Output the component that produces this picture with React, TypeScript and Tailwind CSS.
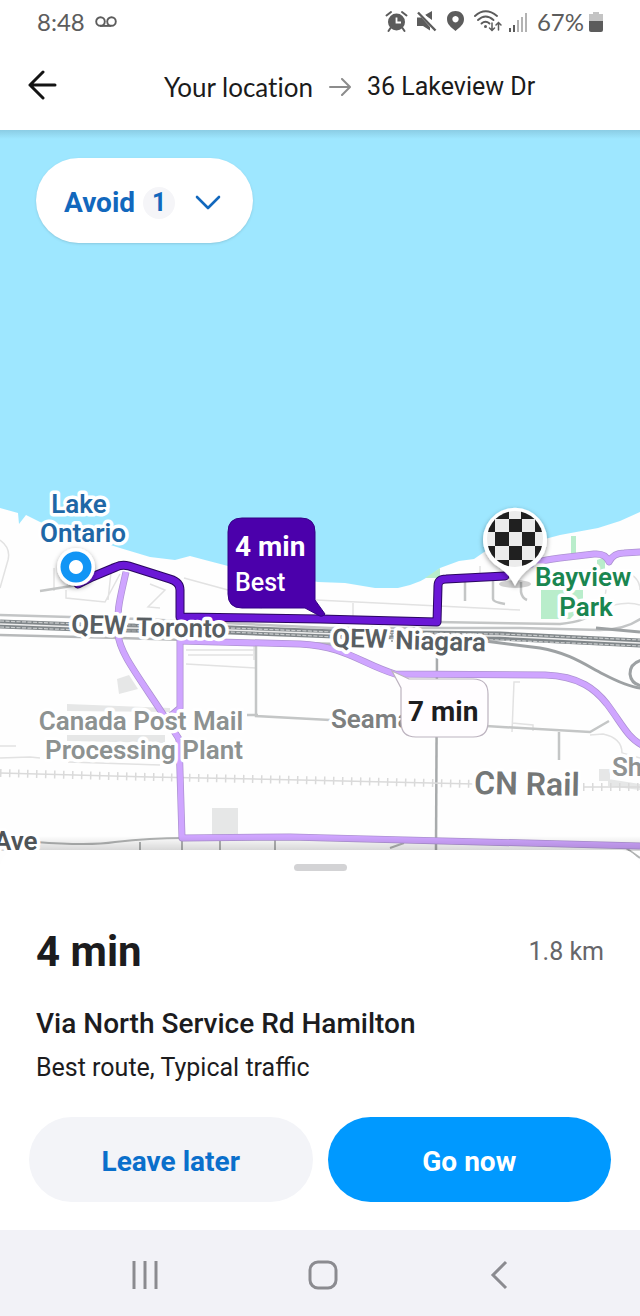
import React from "react";

const label = {
  fontFamily: "Roboto, sans-serif",
  stroke: "#ffffff",
  strokeWidth: 7,
  strokeLinejoin: "round" as const,
  paintOrder: "stroke" as const,
};

function StatusIcons() {
  return (
    <svg width="144" height="24" viewBox="384 10 144 24" fill="#5c5c5c" aria-hidden="true">
      <g>
        <circle cx="395.500" cy="22" r="8.500" />
        <path d="M385.500 15.500 L390 12 M405.500 15.500 L401 12 M389.500 28 L387.500 31 M401.500 28 L403.500 31" stroke="#5c5c5c" strokeWidth="2" strokeLinecap="round" />
        <path d="M395.500 17.500 V22.500 H400" stroke="#fff" strokeWidth="1.800" fill="none" />
      </g>
      <path d="M416 17.500 H420.500 L429 27 V30.500 L422 26 H416 Z M424 15 L431 11 V20 Z" />
      <path d="M420 12 L436 29" stroke="#fff" strokeWidth="2" />
      <path d="M417 12.500 L434.500 30.500" stroke="#5c5c5c" strokeWidth="2.400" />
      <path fillRule="evenodd" d="M454.500 11 C449.500 11 446 14.500 446 19 C446 24.500 450 27 454.500 31 C459 27 463 24.500 463 19 C463 14.500 459.500 11 454.500 11 Z M454.500 16 A3.200 3.200 0 1 0 454.510 16 Z" />
      <g fill="none" stroke="#5c5c5c" strokeWidth="1.900" strokeLinecap="round">
        <path d="M474 16 Q484.500 6.500 496 16" />
        <path d="M477 20 Q484.500 13 492.500 20" />
        <path d="M480.500 23.500 Q484.500 20 488.500 23.500" />
        <path d="M491 23 V30 M488.500 28 L491 30.500 L493.500 28 M497.500 30 V23 M495 25 L497.500 22.500 L500 25" strokeWidth="1.500" />
      </g>
      <circle cx="484.500" cy="26.500" r="1.500" />
      <path d="M508 28h2v4h-2z M512 25h2v7h-2z" />
      <path d="M516 20h2v12h-2z M520 17h2v15h-2z M524 13h2v19h-2z" fill="#b3b3b3" />
    </svg>
  );
}

function StatusBar() {
  return (
    <div className="flex h-11 items-center justify-between pr-9 pl-[37px] text-[#5c5c5c]">
      <div className="flex items-center gap-2.5">
        <span className="font-[Lato,sans-serif] text-[24px] leading-6">8:48</span>
        <svg width="22" height="14" viewBox="0 0 22 14" fill="none" stroke="#5c5c5c" strokeWidth="1.900" aria-hidden="true">
          <ellipse cx="5.500" cy="6.500" rx="4.300" ry="4.300" />
          <ellipse cx="16.500" cy="6.500" rx="4.300" ry="4.300" />
          <path d="M5 10.900 H16" />
        </svg>
      </div>
      <div className="flex items-center gap-2">
        <StatusIcons />
        <div className="flex items-center gap-1">
          <span className="font-[Lato,sans-serif] text-[24px] leading-6">67%</span>
          <svg width="16" height="22" viewBox="0 0 16 22" aria-hidden="true">
            <path d="M5 1 h6 v2 h4 v7 H1 V3 h4z" fill="#c4c4c4" />
            <path d="M1 10 h14 v9 q0 2 -2 2 H3 q-2 0 -2 -2z" fill="#5c5c5c" />
          </svg>
        </div>
      </div>
    </div>
  );
}

function Header() {
  return (
    <header className="flex h-[86px] items-center pb-1 pl-[27px] text-[#1b1b1b]">
      <button aria-label="Back" className="flex size-8 items-center">
        <svg width="30" height="30" viewBox="0 0 30 30" fill="none" stroke="#141414" strokeWidth="3" strokeLinecap="round" strokeLinejoin="round">
          <path d="M28 15 H3 M16 2 L3 15 L16 28" />
        </svg>
      </button>
      <div className="flex flex-1 items-center justify-center gap-4 pt-1 text-[25px] leading-8">
        <span className="font-[Lato,sans-serif] text-[26px] [font-variant-ligatures:none]">Your location</span>
        <svg width="22" height="18" viewBox="0 0 22 18" fill="none" stroke="#8c8c8c" strokeWidth="2" strokeLinecap="round" strokeLinejoin="round" aria-hidden="true">
          <path d="M1 9 H20 M13 1 L21 9 L13 17" />
        </svg>
        <span>36 Lakeview Dr</span>
      </div>
    </header>
  );
}

const altRoutes = [
  "M126 572 C121 595 116 610 118 634 C120 656 142 680 179 739",
  "M180 620 V708 L168 718",
  "M179 739 L182 838 L290 837 L640 846",
  "M180 641 L300 644 C345 646 362 664 395 674 L545 675 C580 676 596 690 607 704 C622 724 628 738 642 745",
  "M512 574 C530 562 545 560 560 558 L594 554 Q606 553 609 562 Q613 553 624 553 L642 552",
];

const mainRoute = "M78 584 Q86 580 92 577 L116 567 Q122 564 129 566 L170 579 Q180 582 180 590 V617 L320 619 L437 622 L438 586 Q438 579 446 579 L505 576";

function RouteMap() {
  return (
    <svg
      viewBox="0 130 640 740"
      className="block h-full w-full"
      role="img"
      aria-label="Route map"
    >
      <defs>
        <linearGradient id="sheetShade" x1="0" y1="0" x2="0" y2="1">
          <stop offset="0" stopColor="#000" stopOpacity="0" />
          <stop offset="1" stopColor="#000" stopOpacity="0.160" />
        </linearGradient>
        <linearGradient id="headerShade" x1="0" y1="0" x2="0" y2="1">
          <stop offset="0" stopColor="#5f8fa5" stopOpacity="0.300" />
          <stop offset="1" stopColor="#5f8fa5" stopOpacity="0" />
        </linearGradient>
        <filter id="soft" x="-30%" y="-30%" width="160%" height="160%">
          <feDropShadow dx="0" dy="2" stdDeviation="2.500" floodOpacity="0.400" />
        </filter>
        <clipPath id="flagClip"><circle cx="515" cy="539" r="28" /></clipPath>
      </defs>

      <rect x="0" y="130" width="640" height="740" fill="#fefefe" />
      <path fill="#9ee7ff" d="M0 130 H640 V512 L620 521 L598 528 L560 535 L545 539 L490 548 L474 559 L459 561 L440 568 Q424 583 398 588 L375 588 L345 583 L318 582 L228 566 L205 560 L190 556 L175 560 L150 557 L120 548 L95 540 L40 522 L26 515 L19 524 L18 513 L0 508 Z" />
      <rect x="0" y="130" width="640" height="9" fill="url(#headerShade)" />

      <g fill="#b9edcb">
        <path d="M541 590 H583 V606 L570 619 H541 Z" />
        <path d="M571 536 h5 v20 h-5z M597 560 l8 -3 v14 h-8z M425 578 L440 568 V578 Z" />
      </g>
      <g fill="#e6e7e7">
        <path d="M117 679 L129 675 L138 689 L119 694 Z M67 704 L170 708 L170 712 L67 711 Z M67 735 L165 735 V743 L67 741 Z" />
        <path d="M212 808 H238 V835 H212 Z M599 769 h11 v12 h-11z M608 779 L640 784 V790 L608 786Z" />
      </g>

      <g fill="none" stroke="#e2e2e2" strokeWidth="1.500">
        <path d="M0 540 Q11 548 8 560 L0 588 M54 568 V591 M66 590 V598 L105 602 L120 574 M112 563 L108 600 M184 578 L228 590 M150 584 L165 590 L148 607 L160 608 M230 600 L262 608 M316 600 L520 610 M353 603 V618" />
        <path d="M186 650 H256 V668 L186 664 M188 655 H253 M254 645 V660 M512 732 L514 682 H520 M512 723 L533 725 V731 M590 735 L603 734 Q622 738 622 753 L640 758" />
        <path d="M595 610 Q625 600 640 605 M600 576 Q612 590 600 602 M620 570 Q640 575 640 590 M480 566 V580 M0 758 L30 757 L40 758 M0 746 H16 M68 762 L160 765" />
      </g>

      <g fill="none" stroke="#c4c6c6" strokeWidth="2.500">
        <path d="M40 591 L78 585 M465 581 V601 M493 581 V599 Q493 602 505 604 M521 582 V592 Q522 598 527 600 M436 622 L560 624 Q588 621 596 611" />
        <path d="M256 646 V716 L330 720 M247 715 H258 M486 726 L590 732 L609 721 M559 732 V760" />
      </g>
      <path d="M437 652 L436 850" stroke="#a8abac" strokeWidth="2.500" fill="none" />
      <path d="M36 842 Q90 846 115 842 Q150 838 184 838 M140 842 V850 M182 838 V850 M220 840 V850 M275 840 V850 M390 848 L404 843 M626 848 L640 858" stroke="#b1b3b3" strokeWidth="2" fill="none" />

      <g fill="none">
        <path d="M0 773 L150 777 L300 780 L475 784 M583 787 L640 787" stroke="#dadada" strokeWidth="1.500" />
        <path d="M0 773 L150 777 L300 780 L475 784 M583 787 L640 787" stroke="#dadada" strokeWidth="8" strokeDasharray="1.500 7.500" />
      </g>

      <g fill="none" strokeLinecap="butt">
        <path d="M0 615 L140 619 L330 628 L520 628 L600 630 Q625 630 642 618" stroke="#c3c5c6" strokeWidth="2.500" />
        <path d="M0 635 L120 638 L250 642 L340 644" stroke="#b7b9ba" strokeWidth="2.500" />
        <path d="M0 624 L80 627 L230 630 L335 634 L500 636 L642 643" stroke="#81878a" strokeWidth="9" />
        <path d="M0 621 L80 624 L230 628 L335 632 L500 634 L642 640 M0 627 L80 630 L230 632 L335 637 L500 640 L642 646" stroke="#c9cccd" strokeWidth="1.200" strokeDasharray="4 1.500" />
        <path d="M0 624 L80 627 L230 630 L335 634 L500 636 L642 643" stroke="#eeeeee" strokeWidth="1.500" />
        <path d="M485 641 L540 648 C570 653 587 666 603 674 Q630 688 642 688 M596 628 L640 632" stroke="#9da1a3" strokeWidth="3" />
        <path d="M642 660 Q630 663 630 674 Q631 684 642 686" stroke="#9da1a3" strokeWidth="3" />
      </g>

      <g fill="none" strokeLinejoin="round">
        {altRoutes.map((d) => <path key={d} d={d} stroke="#ad92d2" strokeWidth="7" />)}
        {altRoutes.map((d) => <path key={d} d={d} stroke="#cfa5ff" strokeWidth="5.500" />)}
        <path d={mainRoute} stroke="#2a075f" strokeWidth="9" strokeLinecap="round" />
        <path d={mainRoute} stroke="#6a18d6" strokeWidth="7" strokeLinecap="round" />
      </g>

      <rect x="0" y="836" width="640" height="15" fill="url(#sheetShade)" />

      <g style={label} fontWeight="600" fontSize="26">
        <g fill="#1f67a6" textAnchor="middle">
          <text x="79" y="513">Lake</text>
          <text x="83" y="542">Ontario</text>
        </g>
        <g fill="#585e62">
          <text x="71" y="633" transform="rotate(1.500 71 633)">QEW</text>
          <text x="136" y="636" transform="rotate(1 136 636)">Toronto</text>
          <text x="332" y="647" transform="rotate(1 332 647)">QEW</text>
          <text x="395" y="649" transform="rotate(1.500 395 649)">Niagara</text>
        </g>
        <g fill="#8d9291" textAnchor="middle">
          <text x="141" y="730">Canada Post Mail</text>
          <text x="144" y="759">Processing Plant</text>
        </g>
        <text x="331" y="728" fill="#7d8080">Seama</text>
        <text x="474" y="794" fill="#747777" fontSize="32" transform="rotate(1 474 794)">CN Rail</text>
        <text x="612" y="776" fill="#909393">Sh</text>
        <text x="-6" y="850" fill="#4f5457">Ave</text>
        <g fill="#1a8650" textAnchor="middle">
          <text x="583" y="586">Bayview</text>
          <text x="586" y="616">Park</text>
        </g>
      </g>
      <path d="M127 626 h9 M127 630 h9 M391 635 h2 M391 641 h2" stroke="#8b9093" strokeWidth="1.500" />

      <g>
        <circle cx="76" cy="567" r="19" fill="#fff" filter="url(#soft)" />
        <circle cx="76" cy="567" r="11" fill="none" stroke="#1195f5" strokeWidth="9" />
        <circle cx="76" cy="567" r="7" fill="#fff" />
      </g>

      <ellipse cx="515" cy="584" rx="16" ry="4" fill="#000" opacity="0.180" />
      <path d="M515 586 Q509 574 500 568 A32 32 0 1 1 530 568 Q521 574 515 586 Z" fill="#fff" filter="url(#soft)" />
      <circle cx="515" cy="539" r="28" fill="#ececec" />
      <g clipPath="url(#flagClip)" fill="#202020">
        <path d="M483 510 h26 v9 h-14 v13 h-12z M521 510 h26 v22 h-12 v-13 h-14z" />
        <path d="M509 519 h13 v13 h-13z M495 532 h14 v14 h-14z M522 532 h13 v14 h-13z M509 546 h13 v14 h-13z" />
        <path d="M483 546 h12 v14 h14 v10 h-26z M535 546 h12 v24 h-25 v-10 h13z" />
      </g>

      <g fontFamily="Roboto, sans-serif">
        <path d="M242 518 H301 Q315 518 315 532 V600 L325 614 Q322 618 318 615 L305 608 H242 Q228 608 228 594 V532 Q228 518 242 518 Z" fill="#4b00ab" stroke="#330084" strokeWidth="1" />
        <text x="235" y="556" fill="#fff" fontWeight="700" fontSize="28">4 min</text>
        <text x="235" y="591" fill="#fff" fontWeight="500" fontSize="25">Best</text>
        <path d="M392 671 L409 679 H473 Q488 679 488 694 V722 Q488 737 473 737 H416 Q401 737 401 722 V688 Z" fill="#fffdff" stroke="#bcb3bf" strokeWidth="1.200" />
        <text x="408" y="721" fill="#1d1d1f" fontWeight="700" fontSize="28">7 min</text>
      </g>
    </svg>
  );
}

function RouteSheet() {
  return (
    <section className="relative -mt-5 rounded-t-[18px] bg-white px-[29px] pt-[14px] pb-7 text-[#1c1c1e]">
      <div className="mx-auto h-[7px] w-[53px] rounded-sm bg-[#d3d3d5]" />
      <div className="mt-[57px] px-[7px]">
        <div className="flex items-center justify-between">
          <h1 className="text-[42px] leading-[48px] font-bold">4 min</h1>
          <p className="text-[25px] leading-8 text-[#66666a]">1.8 km</p>
        </div>
        <h2 className="mt-7 text-[28px] leading-10 font-medium">Via North Service Rd Hamilton</h2>
        <p className="mt-1 text-[25px] leading-10">Best route, Typical traffic</p>
      </div>
      <div className="mt-[29px] grid grid-cols-2 gap-[15px] text-[28px] font-bold">
        <button className="h-[85px] rounded-full bg-[#f3f4f8] pt-1 text-[#0a6fcb]">Leave later</button>
        <button className="h-[85px] rounded-full bg-[#0099ff] pt-1 text-white">Go now</button>
      </div>
    </section>
  );
}

function SystemNav() {
  return (
    <nav className="grid h-[86px] grid-cols-[1fr_72px_1fr] items-center bg-[#f2f2f7] pt-1 pl-1">
      <button aria-label="Recent apps" className="flex justify-center">
        <svg width="28" height="30" viewBox="0 0 28 30" stroke="#8b8b90" strokeWidth="3" className="block">
          <path d="M3 1 V29 M14 1 V29 M25 1 V29" />
        </svg>
      </button>
      <button aria-label="Home" className="flex justify-center">
        <svg width="32" height="32" viewBox="0 0 32 32" fill="none" stroke="#8b8b90" strokeWidth="3">
          <rect x="4" y="3" width="26" height="26" rx="8" />
        </svg>
      </button>
      <button aria-label="Back" className="flex justify-center">
        <svg width="18" height="30" viewBox="0 0 18 30" fill="none" stroke="#8b8b90" strokeWidth="3">
          <path d="M16 2 L3 15 L16 28" />
        </svg>
      </button>
    </nav>
  );
}

export default function App() {
  return (
    <main className="flex min-h-screen flex-col bg-white font-[Roboto,sans-serif]">
      <StatusBar />
      <Header />
      <div className="relative aspect-[640/740] w-full">
        <RouteMap />
        <button className="absolute top-7 left-9 flex h-[85px] w-[217px] items-center rounded-full bg-white pt-1 pl-7 text-[28px] font-bold text-[#1268bd] shadow-sm">
          <span>Avoid</span>
          <span className="ml-2 flex size-8 items-center justify-center rounded-full bg-[#f5f5f8] text-[25px]">1</span>
          <svg className="ml-5" width="26" height="16" viewBox="0 0 26 16" fill="none" stroke="#1268bd" strokeWidth="2.600" strokeLinecap="round" strokeLinejoin="round" aria-hidden="true">
            <path d="M2 2 L13 13 L24 2" />
          </svg>
        </button>
      </div>
      <RouteSheet />
      <SystemNav />
    </main>
  );
}
